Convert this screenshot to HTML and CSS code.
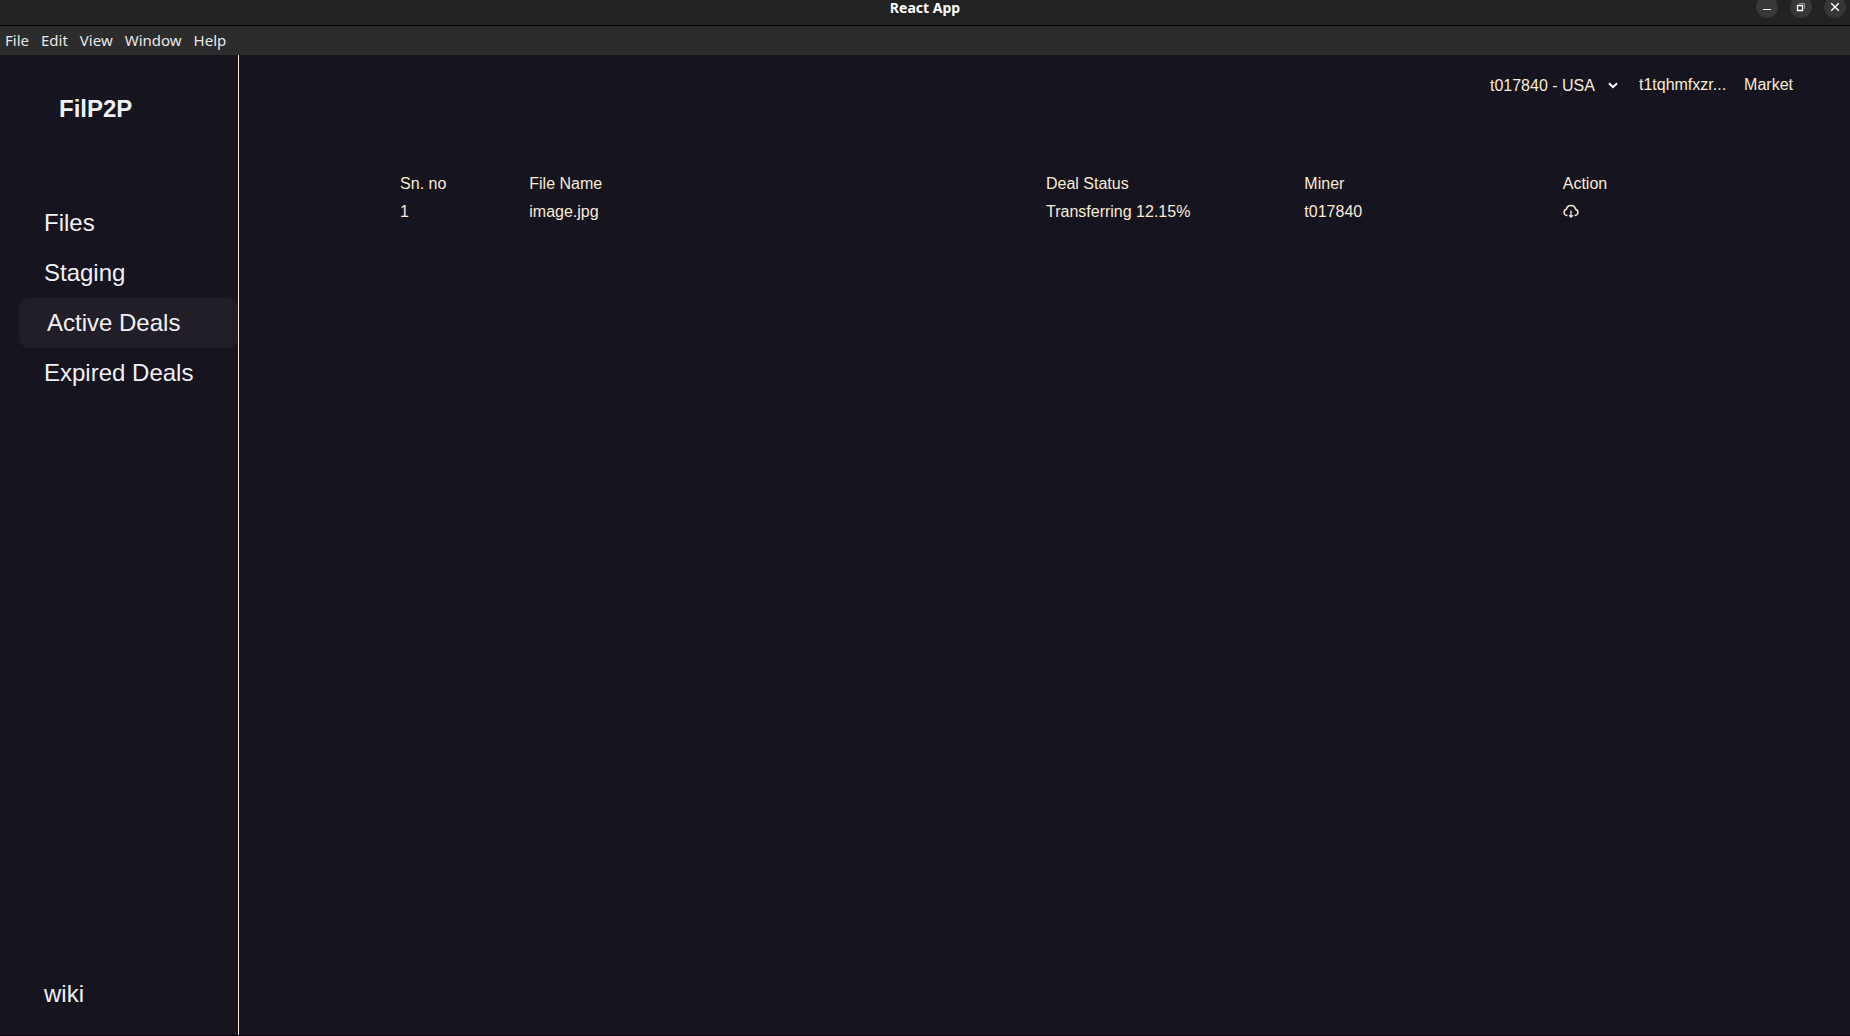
FILE: index.html
```html
<!DOCTYPE html>
<html lang="en">
<head>
<meta charset="utf-8">
<title>React App</title>
<link rel="stylesheet" href="styles.css">
</head>
<body>
<header class="titlebar">
  <span class="titlebar-title">React App</span>
  <div class="window-controls">
    <button class="window-button" type="button" aria-label="Minimize"><svg width="22" height="22" viewBox="0 0 22 22"><path d="M7 13.500h8" stroke="#fff"/></svg></button>
    <button class="window-button" type="button" aria-label="Restore"><svg width="22" height="22" viewBox="0 0 22 22" fill="none"><path d="M7.500 9.500h5v5h-5z" stroke="#fff" stroke-width="1.300"/><path d="M9 7.500h5.500V13" stroke="#999"/></svg></button>
    <button class="window-button" type="button" aria-label="Close"><svg width="22" height="22" viewBox="0 0 22 22"><path d="M7.200 7.200l7.600 7.600M14.800 7.200l-7.600 7.600" stroke="#fff" stroke-width="1.400"/></svg></button>
  </div>
</header>
<nav class="menubar" aria-label="Application menu">
  <button class="menu-item" type="button">File</button>
  <button class="menu-item" type="button">Edit</button>
  <button class="menu-item" type="button">View</button>
  <button class="menu-item" type="button">Window</button>
  <button class="menu-item" type="button">Help</button>
</nav>
<div class="app">
  <aside class="sidebar">
    <h1 class="brand">FilP2P</h1>
    <nav class="side-nav" aria-label="Sections">
      <a class="side-link" href="#files">Files</a>
      <a class="side-link" href="#staging">Staging</a>
      <a class="side-link side-link-active" href="#active">Active Deals</a>
      <a class="side-link" href="#expired">Expired Deals</a>
    </nav>
    <a class="side-link side-wiki" href="#wiki">wiki</a>
  </aside>
  <main class="content">
    <div class="toolbar">
      <div class="select-wrap">
        <select class="miner-select" aria-label="Miner"><option>t017840 - USA</option></select>
        <svg class="select-arrow" width="10" height="7" viewBox="0 0 10 7" fill="none"><path d="M1 1.200l4 4 4-4" stroke="#fff" stroke-width="2"/></svg>
      </div>
      <a class="toolbar-link" href="#wallet">t1tqhmfxzr...</a>
      <a class="toolbar-link" href="#market">Market</a>
    </div>
    <table class="deals">
      <colgroup><col class="col-1"><col class="col-4"><col class="col-2"><col class="col-2"><col class="col-1"></colgroup>
      <thead>
        <tr><th>Sn. no</th><th>File Name</th><th>Deal Status</th><th>Miner</th><th>Action</th></tr>
      </thead>
      <tbody>
        <tr>
          <td>1</td><td>image.jpg</td><td>Transferring 12.15%</td><td>t017840</td>
          <td><button class="download" type="button" aria-label="Download"><svg width="16" height="16" viewBox="0 0 16 16" fill="none" stroke="antiquewhite" stroke-width="1.400"><path d="M4.500 11.500H4A3.200 3.200 0 0 1 3.500 5.200a4.600 4.600 0 0 1 9 0A3.200 3.200 0 0 1 12 11.500h-.500"/><path d="M8 6.500v6M6.200 11.200l1.800 1.800 1.800-1.800" stroke-width="1.300"/></svg></button></td>
        </tr>
      </tbody>
    </table>
  </main>
</div>
</body>
</html>
```
FILE: styles.css
```css
* {
  box-sizing: border-box;
}

body {
  margin: 0;
  min-height: 100vh;
  display: flex;
  flex-direction: column;
  background: #16141f;
  color: antiquewhite;
  font: 16px/20px "Liberation Sans", Arial, sans-serif;
}

button,
select {
  padding: 0;
  border: 0;
  background: none;
  color: inherit;
  font: inherit;
}

a {
  color: inherit;
  text-decoration: none;
}

.titlebar {
  display: grid;
  grid-template-columns: 1fr auto 1fr;
  height: 26px;
  background: #222;
  border-bottom: 1px solid #000;
  color: #fff;
  font: bold 14px/15px "Noto Sans", sans-serif;
}

.titlebar-title {
  grid-column: 2;
}

.window-controls {
  display: flex;
  justify-content: flex-end;
  gap: 12px;
  margin-top: -4px;
  padding-right: 4px;
}

.window-button {
  width: 22px;
  height: 22px;
  border-radius: 50%;
  background: #373737;
}

.window-button svg {
  display: block;
}

.menubar {
  display: flex;
  gap: 12px;
  height: 29px;
  padding: 0 5px 2px;
  background: #2c2c2c;
  color: #e8e8e8;
  font: 15px/26px "Noto Sans", sans-serif;
}

.app {
  flex: 1;
  display: flex;
  border-bottom: 1px solid #0a0410;
}

.sidebar {
  flex: none;
  width: 239px;
  display: flex;
  flex-direction: column;
  padding: 38px 0 16px 19px;
  border-right: 1px solid antiquewhite;
  color: #f0f0f5;
}

.brand {
  margin: 0 0 73px;
  padding-left: 40px;
  font-size: 24px;
  line-height: 32px;
}

.side-link {
  display: block;
  padding-left: 25px;
  border-radius: 10px;
  font-size: 24px;
  line-height: 50px;
}

.side-link-active {
  padding-left: 28px;
  background: #221e28;
}

.side-wiki {
  margin-top: auto;
}

.content {
  flex: 1;
}

.toolbar {
  display: flex;
  justify-content: flex-end;
  gap: 18px;
  padding: 20px 57px 0 0;
}

.select-wrap {
  position: relative;
  margin-right: 3px;
}

.miner-select {
  display: block;
  width: 128px;
  height: 22px;
  appearance: none;
}

.select-arrow {
  position: absolute;
  right: 0;
  top: 7px;
  pointer-events: none;
}

.deals {
  width: calc(80% + 3px);
  margin: 73px 0 0 10%;
  table-layout: fixed;
  border-collapse: collapse;
}

.deals th,
.deals td {
  height: 28px;
  padding: 0;
  font-weight: normal;
  text-align: left;
}

.col-1 {
  width: 10%;
}

.col-2 {
  width: 20%;
}

.col-4 {
  width: 40%;
}

.download,
.download svg {
  display: block;
}
```
